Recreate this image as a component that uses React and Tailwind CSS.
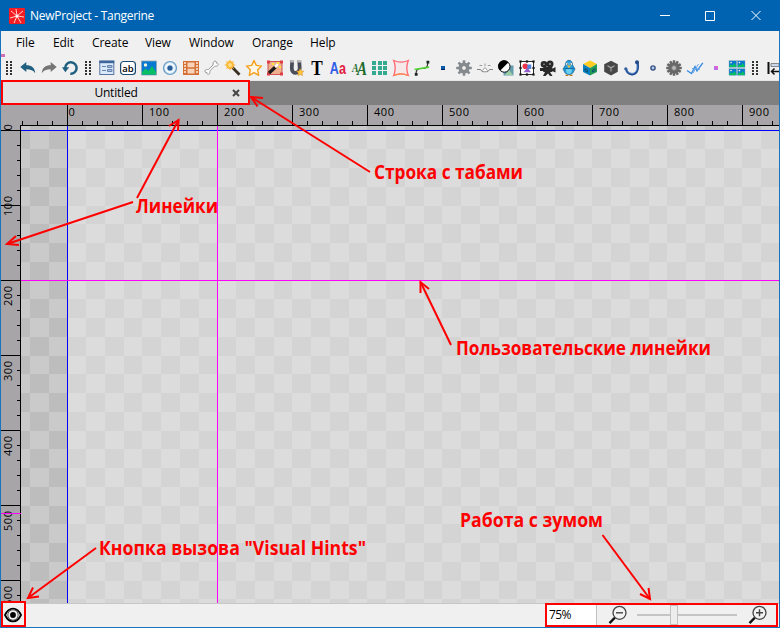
import React from "react";

const FONT = "font-['Open_Sans','Noto_Sans',sans-serif]";

function Icon({ children }) {
  return (
    <span className="flex h-6 w-[21px] shrink-0 items-center justify-center">
      <svg width="16" height="16" viewBox="0 0 16 16" fill="none" className="overflow-visible">
        {children}
      </svg>
    </span>
  );
}

function Handle() {
  return (
    <svg width="6" height="14" className="shrink-0" shapeRendering="crispEdges">
      {[0, 3, 6, 9, 12].map((y) => (
        <g key={y} fill="#333">
          <rect x="0" y={y} width="2" height="2" />
          <rect x="4" y={y} width="2" height="2" />
        </g>
      ))}
    </svg>
  );
}

function Gear({ color, hole, teeth }) {
  return (
    <g>
      {Array.from({ length: teeth }, (_, i) => (
        <rect key={i} x="6.7" y="0.2" width="2.6" height="4" rx=".5" fill={color} transform={`rotate(${(i * 360) / teeth} 8 8)`} />
      ))}
      <circle cx="8" cy="8" r="5.6" fill={color} />
      <circle cx="8" cy="8" r="2.4" fill={hole} stroke="#777" strokeWidth=".8" />
    </g>
  );
}

function Photo({ x = 0, y = 0, w = 15, h = 14 }) {
  return (
    <g transform={`translate(${x} ${y}) scale(${w / 15} ${h / 14})`}>
      <rect width="15" height="14" fill="#0878d0" stroke="#8fa8b4" strokeWidth=".8" />
      <circle cx="4" cy="4" r="1.7" fill="#f4f6d8" />
      <path d="M.5 11 4 7.5l3 2.5 3.5-5 4 6v2.6H.5Z" fill="#05bf62" />
    </g>
  );
}

const historyIcons = [
  <path d="M.3 7 6.3 2v3.3c5.4 0 8.600 2.600 8.900 7.900-2-3-4.500-4-8.900-4V12Z" fill="#205f80" />,
  <path d="M15.700 7 9.700 2v3.300C4.300 5.300 1.100 7.900.8 13.200c2-3 4.500-4 8.900-4V12Z" fill="#757575" />,
  <g>
    <path d="M3.200 8A5.700 5.700 0 1 1 8.300 13.700" stroke="#205f80" strokeWidth="2.500" />
    <path d="M0 7.300h7.200L3.300 12.200Z" fill="#205f80" />
  </g>,
];

const toolIcons = [
  <g>
    <rect x=".8" y="1" width="14" height="13.500" fill="#dbeafa" stroke="#5574a0" />
    <path d="M.3 2h15" stroke="#3f669c" strokeWidth="2.400" />
    <path d="M3 6.500h4M3 10.500h4" stroke="#6783ad" />
    <path d="M8.500 5.500h4.500v2H8.500ZM8.500 9.500h4.500v2H8.500Z" fill="#a6bfdd" stroke="#6783ad" />
  </g>,
  <g>
    <rect x=".6" y="1.500" width="14.800" height="13" rx="3" fill="#fff" stroke="#18486e" strokeWidth="1.200" />
    <text x="8" y="11.500" textAnchor="middle" fontSize="9.500" fill="#000" fontFamily="Open Sans" fontWeight="600">ab</text>
  </g>,
  <Photo x={0.5} y={1} />,
  <g>
    <circle cx="8" cy="8" r="6.500" fill="#c9e1f4" stroke="#679ac0" strokeWidth="1.200" />
    <circle cx="8" cy="8" r="4.200" stroke="#fff" strokeWidth="1.200" />
    <circle cx="8" cy="8" r="2.600" fill="#285f98" />
  </g>,
  <g>
    <rect y="1" width="16" height="14" fill="#d46f35" />
    <path d="M4.500 2.500h7v4.800h-7ZM4.500 8.700h7v4.800h-7Z" fill="#f8d3ba" />
    <path d="M1 3h2M1 6h2M1 9h2M1 12h2M13 3h2M13 6h2M13 9h2M13 12h2" stroke="#fff1e4" strokeWidth="1.500" />
  </g>,
  <path d="M10 1.500c1.500-1.200 2.800 0 2.300 1.600 1.700-.3 2.700 1.200 1.500 2.400-1 1-2 .6-3.300.8L6 10.800c-.3 1.200.2 2.200-.8 3.200-1.200 1-2.500 0-2.200-1.500-1.700.4-2.800-1-1.700-2.300 1-1 2-.5 3.200-.8L9 5c.3-1.400-.2-2.500 1-3.500Z" fill="#fff" stroke="#999" />,
  <g>
    <path d="m7 7 7.500 7.800" stroke="#3b3024" strokeWidth="2.800" />
    <circle cx="5" cy="5" r="3.900" fill="#ffbb30" />
    <path d="M5-.3v10.600M-.3 5h10.600M1.300 1.300l7.400 7.400M8.700 1.300l-7.400 7.400" stroke="#f6b13a" />
    <circle cx="5" cy="5" r="2" fill="#ffdc88" />
  </g>,
  <path d="m8 .5 2.300 4.900 5.300.7-3.900 3.700 1 5.500L8 12.600l-4.700 2.700 1-5.500L.4 6.100l5.300-.7Z" fill="#fff6e6" stroke="#f5a01c" strokeWidth="1.400" strokeLinejoin="round" />,
  <g>
    <rect x="1" y="1.500" width="14" height="13" fill="#efb18d" stroke="#d05355" />
    <path d="M0 .5h3v3H0ZM13 .5h3v3h-3ZM0 12.500h3v3H0ZM13 12.500h3v3h-3Z" fill="#e03c45" />
    <path d="m2 13 6.500-6" stroke="#1b1919" strokeWidth="3.400" />
    <path d="m8 7 3-3" stroke="#fff" strokeWidth="2.500" />
    <path d="M5 4h2M10 3h2M12 7h2" stroke="#ffea37" strokeWidth="2" />
  </g>,
  <g>
    <path d="M4.200 0 3.800 8c-.3 6.500 8 6.500 7.900 0L11.200 0" stroke="#4b4e59" strokeWidth="3.800" />
    <path d="M2.300 1.200h3.700M9.300 1.200H13" stroke="#b8b8b8" strokeWidth="2.400" />
    <path d="m12.200 8.500 1.200 2.400 2.500.3-1.800 1.900.5 2.600-2.400-1.300-2.300 1.300.4-2.600-1.700-1.900 2.400-.3Z" fill="#ffc437" stroke="#ba7a18" strokeWidth=".4" />
  </g>,
  <text x="8" y="14.500" textAnchor="middle" fontFamily="Liberation Serif" fontWeight="bold" fontSize="20" textLength="11.500" lengthAdjust="spacingAndGlyphs" fill="#000">T</text>,
  <g fontFamily="Liberation Sans" fontSize="17" fontWeight="bold">
    <text x="-.2" y="14" textLength="9" lengthAdjust="spacingAndGlyphs" fill="#315ee8">A</text>
    <text x="9" y="14" textLength="7" lengthAdjust="spacingAndGlyphs" fill="#e31a3e">a</text>
  </g>,
  <g fontFamily="Liberation Serif" fontStyle="italic" fontWeight="bold" fill="#216c2d">
    <text x="1" y="12" fontSize="13" textLength="6.500" lengthAdjust="spacingAndGlyphs">A</text>
    <text x="6" y="14.500" fontSize="19" textLength="10" lengthAdjust="spacingAndGlyphs">A</text>
  </g>,
  <g fill="#36aa91" shapeRendering="crispEdges">
    {[0, 6, 11].map((x) => [1, 6, 11].map((y) => <rect key={`${x}-${y}`} x={x} y={y} width="4" height="4" />))}
  </g>,
  <g>
    <path d="M.7.500c5 2.200 9.600 2.200 14.600 0-2 5-2 10 0 15-5-2.200-9.600-2.200-14.600 0 2-5 2-10 0-15Z" fill="#f6e9ea" stroke="#ff6670" strokeWidth="1.300" />
    <path d="M.7 15.500c5-2.200 9.600-2.200 14.600 0" stroke="#ff8d50" strokeWidth="1.300" />
  </g>,
  <g>
    <path d="M2 14.500c0-4 1-6 4.500-6h3c3 0 4.300-2.500 4.300-6.500" stroke="#333" strokeWidth="1.200" />
    <path d="M.5 9.500 15 7.200" stroke="#52d333" strokeWidth="1.700" />
    <path d="M.8 13h2.800v2.800H.8ZM12.500.8h2.800v2.800h-2.800Z" fill="#1c251e" />
  </g>,
  <g shapeRendering="crispEdges"><rect x="6" y="6" width="4" height="4" fill="#075bab" /><path d="M6 9.500H10" stroke="#001f57" /></g>,
  <Gear color="#858a8e" hole="#eee" teeth={8} />,
  <g>
    <path d="M0 9.500h3.500l1.500 2h6l1.500-2H16" stroke="#808080" />
    <path d="m5.700 10.300 2.300-2.800 2.300 2.800v1.500H5.700Z" fill="#fff" stroke="#888" strokeWidth=".8" />
    <path d="M2.500 5.500h2.700M8 3.500v2.700M10.800 5.500h2.700" stroke="#999" />
  </g>,
  <g>
    <rect x="5.500" y="5.500" width="10" height="10" fill="#659dae" />
    <path d="m7 15 4-5 4 5Z" fill="#9dcd9e" />
    <circle cx="6.300" cy="6.500" r="5.700" fill="#fff" stroke="#000" />
    <path d="M2.300 10.500A5.700 5.700 0 1 1 10.300 2.500Z" fill="#000" />
  </g>,
  <g>
    <rect x="1.500" y="1.500" width="13" height="13" fill="#fff" stroke="#272727" />
    <circle cx="6.300" cy="6.300" r="2.800" fill="#ed3347" />
    <rect x="8.300" y="4.500" width="4" height="4.500" fill="#5185dd" />
    <path d="m4.500 12.300 4-4.800 3.500 4.800Z" fill="#9260cc" />
    {[1.5, 8, 14.5].map((x) => [1.5, 8, 14.5].map((y) => x === 8 && y === 8 ? null : <rect key={`${x}${y}`} x={x - 1.1} y={y - 1.1} width="2.200" height="2.200" fill="#171717" />))}
  </g>,
  <g fill="#292929">
    <circle cx="4" cy="4.300" r="3.300" /><circle cx="10" cy="4" r="3.500" />
    <rect x="3" y="7" width="9.500" height="5" rx="1" />
    <path d="m12 9 3.500-2v5.500L12 11ZM0 8h4v3H0ZM5 12h5l2.500 4h-2.500l-2-2.500L5.500 16H3Z" />
    <circle cx="4" cy="4.300" r=".8" fill="#aaa" /><circle cx="10" cy="4" r=".9" fill="#aaa" />
  </g>,
  <g>
    <path d="M4.500 5c-.3-6.300 7.300-6.300 7 0L14 9l-2.200 4c-2 2-5.600 2-7.600 0L2 9Z" fill="#249ddb" stroke="#155b89" strokeWidth=".7" />
    <ellipse cx="8" cy="10.800" rx="2.800" ry="3.200" fill="#69d0f2" />
    <path d="M3.300 8.500h9.400" stroke="#1769a0" />
    <circle cx="6.200" cy="4" r="1.200" fill="#fff" /><circle cx="9.800" cy="4" r="1.200" fill="#fff" />
    <circle cx="6.400" cy="4" r=".6" fill="#000" /><circle cx="9.600" cy="4" r=".6" fill="#000" />
    <path d="M6 5.500h4L8 8Z" fill="#ffbc26" />
    <path d="M4.500 15.300h2.800M8.700 15.300h2.800" stroke="#bc7c20" strokeWidth="1.200" />
  </g>,
  <g>
    <path d="m8 .5 7 3.500-7 4-7-4Z" fill="#ffcc23" />
    <path d="m1 4 7 4v7.500L1 12Z" fill="#087fbe" />
    <path d="m15 4-7 4v7.500l7-3.500Z" fill="#249b55" />
    <path d="M3 8.500 5.500 10v2L3 10.700ZM13 8.500 10.500 10v2l2.500-1.300Z" stroke="#075273" />
  </g>,
  <g><path d="m8 .7 6.800 3.600v7.500L8 15.500l-6.800-3.700V4.300Z" fill="#474747" /><path d="m4.500 5.800 3.500 2 3.500-2M8 8v3.500" stroke="#aaa" strokeWidth="1.100" /></g>,
  <g>
    <path d="M2.300 9.500c1 5 8 6.500 10.400 2.300 1.600-2.700 1.400-6.300.8-9.500" stroke="#204b91" strokeWidth="2.200" strokeLinecap="round" />
    <path d="M3 10.500c2 3.200 7 3.800 8.900.7 1.300-2.500 1.200-5 .8-7" stroke="#75aae4" strokeWidth=".8" />
    <circle cx="1.800" cy="8.800" r="1.600" fill="#31619f" /><circle cx="13" cy="2.300" r="2" fill="#234c8b" />
  </g>,
  <circle cx="8" cy="8" r="2.100" fill="#b7caeb" stroke="#334f83" strokeWidth="1.400" />,
  <Gear color="#686868" hole="#b7b7b7" teeth={12} />,
  <g><path d="M0 10.500 4.500 13.500 8 6.500l2 4.300 5.800-8" stroke="#368ce2" strokeWidth="1.400" /><path d="m6 13 5.500-9M5 8.500l8 .8" stroke="#61a4e9" /></g>,
  <g shapeRendering="crispEdges"><rect x="6" y="6" width="4" height="4" fill="#bd6ce9" /><path d="M8 6h2v2H8Z" fill="#ef62c4" /></g>,
  <g>
    <Photo x={0} y={0.7} w={7.6} h={6.6} /><Photo x={8.4} y={0.7} w={7.6} h={6.6} />
    <Photo x={0} y={8.7} w={7.6} h={6.6} /><Photo x={8.4} y={8.7} w={7.6} h={6.6} />
  </g>,
];

function RulerTop() {
  const ticks = Array.from({ length: 51 }, (_, i) => i);
  return (
    <svg width="778" height="21" className="block shrink-0 bg-[#a8a5a8]" shapeRendering="crispEdges">
      {ticks.map((i) => {
        const major = i >= 3 && (i - 3) % 5 === 0;
        return <rect key={i} x={21 + i * 15} y={major ? 0 : 16} width="1" height={major ? 20 : 4} fill="#000" />;
      })}
      <rect x="19" y="20" width="759" height="1" fill="#000" />
      {Array.from({ length: 10 }, (_, i) => (
        <text key={i} x={i === 0 ? 67.5 : 73 + i * 75} y="11" fontSize="11" textLength={i === 0 ? undefined : 20} className={FONT} fill="#000">{i * 100}</text>
      ))}
    </svg>
  );
}

function RulerLeft() {
  return (
    <svg width="20" height="477" className="block shrink-0 overflow-visible bg-[#a8a5a8]" shapeRendering="crispEdges">
      {Array.from({ length: 32 }, (_, i) => {
        const major = i % 5 === 0;
        return <rect key={i} x={major ? 0 : 16} y={4 + i * 15} width={major ? 20 : 4} height="1" fill="#000" />;
      })}
      <rect x="19" y="0" width="1" height="477" fill="#000" />
      {[90, 180, 255, 330, 405, 480].map((y, i) => (
        <text key={y} transform={`translate(11 ${y})rotate(-90)`} fontSize="11" textLength="20" className={FONT} fill="#000">{(i + 1) * 100}</text>
      ))}
      <text transform="translate(11 4.500)rotate(-90)" fontSize="11" className={FONT} fill="#000">0</text>
      <rect x="0" y="387" width="20" height="1" fill="#ff00ff" />
    </svg>
  );
}

function Canvas() {
  const cells = [];
  for (let r = -1; r < 26; r++) {
    for (let c = -3; c < 39; c++) {
      const x0 = Math.round(46.25 + c * 18.75);
      const x1 = Math.round(46.25 + (c + 1) * 18.75);
      const y0 = Math.round(4.5 + r * 18.75);
      const y1 = Math.round(4.5 + (r + 1) * 18.75);
      const light = (r + c) % 2 === 0;
      const inside = r >= 0 && c >= 0;
      const fill = inside ? (light ? "#dcdcdc" : "#d4d4d4") : light ? "#cacaca" : "#bdbdbd";
      cells.push(<rect key={`${r}:${c}`} x={x0} y={y0} width={x1 - x0} height={y1 - y0} fill={fill} />);
    }
  }
  return (
    <svg width="758" height="477" className="block shrink-0" shapeRendering="crispEdges">
      {cells}
      <rect x="0" y="4" width="758" height="1" fill="#0000ff" />
      <rect x="46" y="0" width="1" height="477" fill="#0000ff" />
      <rect x="0" y="154" width="758" height="1" fill="#ff00ff" />
      <rect x="196" y="0" width="1" height="477" fill="#ff00ff" />
    </svg>
  );
}

function Magnifier({ plus }) {
  return (
    <svg width="20" height="20" viewBox="0 0 20 20" fill="none" className="shrink-0">
      <path d="m7 12.500-5.500 5.700" stroke="#111" strokeWidth="2.500" />
      <circle cx="11.500" cy="7.800" r="6.500" fill="#f3f3f3" stroke="#444" strokeWidth="1.300" />
      <path d={plus ? "M8 7.800h7M11.500 4.300v7" : "M8 7.800h7"} stroke="#444" strokeWidth="1.400" />
    </svg>
  );
}

const arrows = [
  { line: [370, 172, 251, 97], head: "263 98 251 97 257.500 106.500" },
  { line: [137, 198, 178.5, 120], head: "169 126 178.500 120 178 131" },
  { line: [133, 202, 7, 244], head: "16 236 7 244 19 245" },
  { line: [451, 345, 420.5, 282], head: "420.500 293 420.500 282 429 289" },
  { line: [96, 548, 28, 598], head: "33 587.500 28 598 39 596.500" },
  { line: [602.5, 535, 650, 599], head: "640 594 650 599 648.500 588" },
];

const notes = [
  { x: 374, y: 179, w: 149, t: "Строка с табами" },
  { x: 136, y: 213, w: 82, t: "Линейки" },
  { x: 456, y: 355, w: 255, t: "Пользовательские линейки" },
  { x: 99, y: 555, w: 267, t: 'Кнопка вызова "Visual Hints"' },
  { x: 460, y: 527, w: 143, t: "Работа с зумом" },
];

export default function App() {
  return (
    <div className={`relative flex h-[628px] w-[780px] flex-col overflow-hidden bg-[#f0f0f0] text-black ${FONT}`}>
      <header className="flex h-[31px] shrink-0 items-center bg-[#0063b1] pl-[9px] text-white">
        <svg width="16" height="16" viewBox="0 0 16 16">
          <rect width="16" height="16" rx="1" fill="#f51d23" />
          <path d="m8 8-6-5M8 8 7 1M8 8l6-5M8 8l7 1M8 8l4 7M8 8l-3 7M8 8l-7 2" stroke="#ffd2cb" strokeWidth="1" />
          <circle cx="8" cy="8" r="1.500" fill="#fff" />
        </svg>
        <span className="ml-[5px] whitespace-nowrap text-[12px] leading-4 tracking-[-0.28px]">NewProject - Tangerine</span>
        <svg width="102" height="12" className="mr-[18px] ml-auto" fill="none" stroke="#fff">
          <path d="M0 5.500h10M45.500 1.500h9v9h-9ZM91.500 1l9 9M100.500 1l-9 9" />
        </svg>
      </header>

      <div className="flex min-h-0 flex-1 flex-col border-x border-b border-[#1a73bd]">
        <nav className="flex h-[24px] shrink-0 items-center text-[12px] leading-4 tracking-[-0.1px]">
          <span className="ml-[15px] w-[37px]">File</span>
          <span className="w-[39px]">Edit</span>
          <span className="w-[53px]">Create</span>
          <span className="w-[44px]">View</span>
          <span className="w-[63px]">Window</span>
          <span className="w-[58px]">Orange</span>
          <span>Help</span>
        </nav>
        <div className="-mt-px -mb-[2px] h-[3px] w-[4px] shrink-0 bg-[#cf70b7]" />
        <div className="flex h-[26px] shrink-0 items-center overflow-hidden border-b border-[#e6e6e6]">
          <div className="flex w-[16px] shrink-0 justify-center"><Handle /></div>
          {historyIcons.map((icon, i) => <Icon key={i}>{icon}</Icon>)}
          <div className="flex w-[16px] shrink-0 justify-center"><Handle /></div>
          {toolIcons.map((icon, i) => <Icon key={i}>{icon}</Icon>)}
          <div className="flex w-[16px] shrink-0 justify-center"><Handle /></div>
          <svg width="16" height="16" viewBox="0 0 16 16" className="shrink-0" fill="none">
            <path d="M5.500 2v12" stroke="#111" strokeWidth="2" />
            <path d="M8 3.500h8v3H8Z" fill="#cad8ea" stroke="#888" />
            <path d="M16 11.500H8.500m3-3-3 3 3 3" stroke="#111" strokeWidth="1.500" />
          </svg>
        </div>

        <div className="flex h-[24px] shrink-0 bg-[#808080]">
          <div className="-mt-px flex h-[25px] w-[249px] items-center border-2 border-[#ff0000] bg-[#e3e3e3] text-[12px]">
            <span className="flex-1 pr-[3px] text-center leading-4 tracking-[-0.2px]">Untitled</span>
            <svg width="8" height="8" className="mr-[8px]" viewBox="0 0 8 8"><path d="m1 1 6 6M7 1 1 7" stroke="#444" strokeWidth="2" /></svg>
          </div>
        </div>

        <RulerTop />
        <div className="flex h-[477px] shrink-0">
          <RulerLeft />
          <Canvas />
        </div>

        <footer className="relative flex h-[24px] shrink-0 items-end border-t border-[#c7c7c7] bg-[#f0f0f0]">
          <div className="-mt-[3px] flex h-[26px] w-[25px] shrink-0 items-center justify-center border-2 border-[#ff0000] bg-[#f0f0f0] pt-[2px] pr-[1px]">
            <svg width="18" height="16" viewBox="0 0 18 16" fill="none">
              <path d="M1 8c4-8.500 12-8.500 16 0-4 8.500-12 8.500-16 0Z" stroke="#000" strokeWidth="1.800" />
              <circle cx="9" cy="8" r="5.200" fill="#f0f0f0" stroke="#333" strokeWidth=".8" />
              <circle cx="9" cy="8" r="2.900" fill="#000" />
            </svg>
          </div>
          <div className="mr-[1px] ml-auto flex h-[24px] w-[233px] shrink-0 items-center border-2 border-[#ff0000]">
            <div className="flex h-full w-[50px] items-center border-r border-[#c0c0c0] bg-white pl-[2px] text-[12px] tracking-[-0.6px]">75%</div>
            <div className="ml-[11px] flex"><Magnifier /></div>
            <div className="ml-[9px] flex h-full w-[100px] items-center">
              <div className="h-[2px] w-[33px] bg-[#c5c5c5]" />
              <div className="h-[20px] w-[8px] border border-[#c0c0c0] bg-[#ededed]" />
              <div className="h-[2px] flex-1 bg-[#c5c5c5]" />
            </div>
            <div className="ml-[11px] flex"><Magnifier plus /></div>
          </div>
        </footer>
      </div>

      <svg width="780" height="628" className="pointer-events-none absolute inset-0" fill="none">
        {arrows.map(({ line, head }) => (
          <g key={head} stroke="#ff0000" strokeWidth="2">
            <path d={`M${line[0]} ${line[1]}L${line[2]} ${line[3]}`} />
            <polyline points={head} />
          </g>
        ))}
        {notes.map((n) => (
          <text key={n.t} x={n.x} y={n.y} textLength={n.w} lengthAdjust="spacingAndGlyphs" fontSize="19" fontWeight="700" fill="#ff0000" className={FONT}>{n.t}</text>
        ))}
      </svg>
    </div>
  );
}
